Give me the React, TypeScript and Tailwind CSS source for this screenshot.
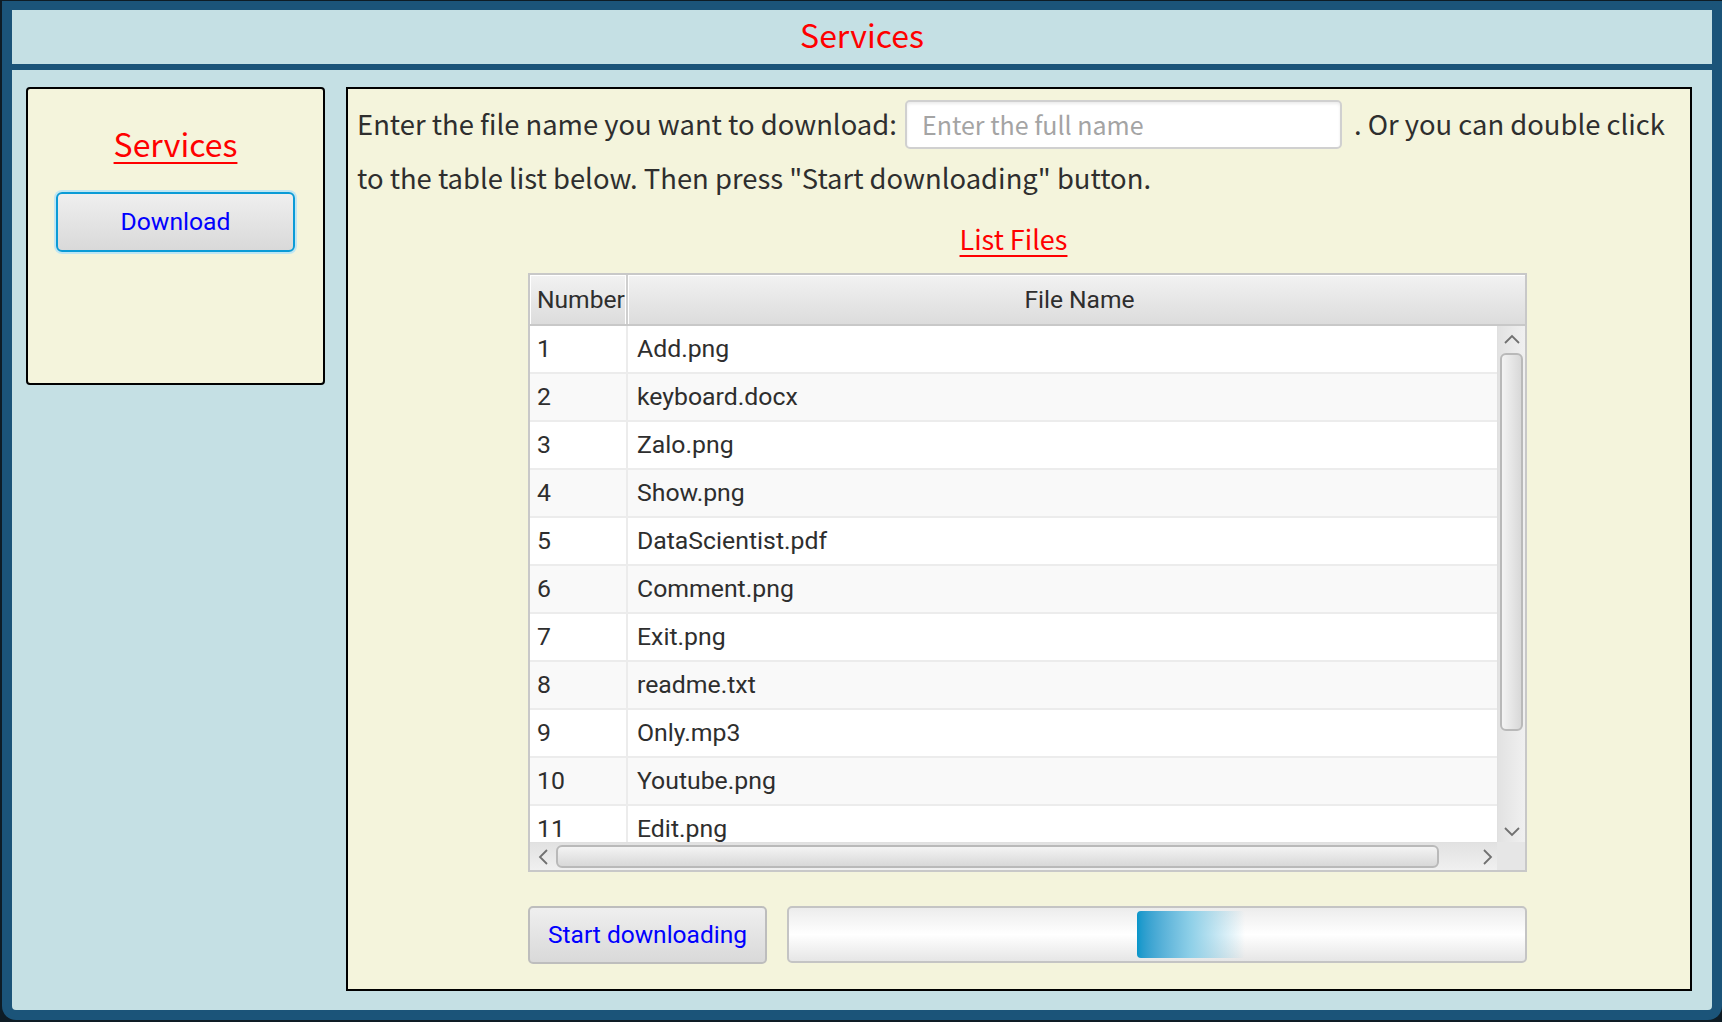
import { useState } from 'react'

const files = [
  'Add.png',
  'keyboard.docx',
  'Zalo.png',
  'Show.png',
  'DataScientist.pdf',
  'Comment.png',
  'Exit.png',
  'readme.txt',
  'Only.mp3',
  'Youtube.png',
  'Edit.png',
]

const krFont = "font-['Noto_Sans_CJK_KR','Noto_Sans',sans-serif]"

function Chevron({ dir }: { dir: 'up' | 'down' | 'left' | 'right' }) {
  const vertical = dir === 'up' || dir === 'down'
  const pts = {
    up: '2,9 9,2 16,9',
    down: '2,2 9,9 16,2',
    left: '9,2 2,9 9,16',
    right: '2,2 9,9 2,16',
  }[dir]
  return (
    <svg viewBox={vertical ? '0 0 18 11' : '0 0 11 18'} className={vertical ? 'w-[18px] h-[11px]' : 'w-[11px] h-[18px]'}>
      <polyline points={pts} fill="none" stroke="#707070" strokeWidth="1.8" />
    </svg>
  )
}

export default function App() {
  const [fileName, setFileName] = useState('')

  return (
    <div className="w-[1722px] h-[1022px] bg-[#0e1c25] pl-[2px] pt-px pb-[2px] font-['Roboto',sans-serif]">
      <div className="h-full flex flex-col border-[10px] border-t-[9px] border-[#1b5479] rounded-b-[14px] bg-[#c5e0e4] overflow-hidden">
        {/* title bar */}
        <div className={`h-[54px] pb-[6px] flex items-center justify-center text-[32px] text-[#ff0000] ${krFont}`}>
          Services
        </div>
        <div className="h-[6px] bg-[#1b5479]" />

        <div className="flex-1 flex gap-[21px] pl-[14px] pr-[20px] pt-[17px] pb-[19px]">
          {/* side menu */}
          <div className="w-[299px] h-[298px] shrink-0 bg-[#f4f4dc] border-2 border-black rounded-[4px] flex flex-col items-center">
            <div className={`mt-[29px] h-[50px] leading-[50px] text-[32px] text-[#ff0000] underline underline-offset-[5px] decoration-2 ${krFont}`}>
              Services
            </div>
            <button className="mt-[24px] w-[239px] h-[60px] rounded-[6px] border-2 border-[#0a9bd6] shadow-[0_0_0_2px_#bfe6f3] bg-gradient-to-b from-[#efefef] to-[#d9d9d9] text-[24.7px] text-[#0000ff]">
              Download
            </button>
          </div>

          {/* main */}
          <div className="flex-1 bg-[#f4f4dc] border-2 border-black flex flex-col">
            <div className={`pl-[9px] pt-[7px] leading-[54px] text-[27.4px] text-[#2e2e2e] ${krFont}`}>
              Enter the file name you want to download:{' '}
              <input
                value={fileName}
                onChange={(e) => setFileName(e.target.value)}
                placeholder="Enter the full name"
                className={`ml-[2px] mr-[12px] w-[437px] h-[49px] px-[15px] bg-white rounded-[5px] border-2 border-[#d0d0d0] shadow-[inset_0_2px_3px_rgba(0,0,0,0.08)] text-[25px] placeholder:text-[#a4a4a4] outline-none ${krFont}`}
              />
              . Or you can double click
              <br />
              to the table list below. Then press "Start downloading" button.
            </div>

            <div className={`ml-[180px] w-[999px] pr-[28px] mt-[18px] text-center leading-[34px] text-[27px] text-[#ff0000] ${krFont}`}>
              <span className="underline underline-offset-[5px] decoration-2">List Files</span>
            </div>

            {/* table */}
            <div className="ml-[180px] mt-[17px] w-[999px] h-[599px] border-2 border-[#c8c8c8] flex flex-col bg-white">
              <div className="h-[51px] shrink-0 flex border-b-2 border-[#c8c8c8] bg-gradient-to-b from-[#f2f2f2] to-[#dcdcdc] text-[24.6px] text-[#2e2e2e]">
                <div className="w-[98px] flex items-center pl-[7px] pt-[2px] border-r-2 border-[#cfcfcf] shadow-[inset_-1px_0_0_#fff,inset_1px_1px_0_#fff]">
                  Number
                </div>
                <div className="flex-1 flex items-center justify-center pl-[6px] pt-[2px] shadow-[inset_1px_1px_0_#fff]">File Name</div>
              </div>

              <div className="h-[516px] shrink-0 flex">
                <div className="flex-1 overflow-hidden">
                  {files.map((f, i) => (
                    <div
                      key={f}
                      className={`h-[48px] flex border-b-2 border-[#ececec] text-[24.8px] text-[#2e2e2e] ${i % 2 === 0 ? 'bg-white' : 'bg-[#f9f9f9]'}`}
                    >
                      <div className="w-[98px] shrink-0 flex items-center pl-[7px] border-r-2 border-[#ececec]">{i + 1}</div>
                      <div className="flex-1 flex items-center pl-[9px]">{f}</div>
                    </div>
                  ))}
                </div>
                <div className="w-[28px] shrink-0 bg-gradient-to-r from-[#e2e2e2] to-[#f0f0f0] border-l border-[#e0e0e0] flex flex-col items-center">
                  <div className="h-[27px] flex items-center justify-center">
                    <Chevron dir="up" />
                  </div>
                  <div className="w-[23px] h-[378px] rounded-[6px] border-2 border-[#b9b9b9] bg-gradient-to-r from-[#f4f4f4] to-[#d8d8d8]" />
                  <div className="flex-1 flex items-end justify-center pb-[5px]">
                    <Chevron dir="down" />
                  </div>
                </div>
              </div>

              <div className="flex-1 flex">
                <div className="flex-1 bg-gradient-to-b from-[#e2e2e2] to-[#f0f0f0] border-t border-[#e0e0e0] flex items-center">
                  <div className="w-[26px] flex justify-center">
                    <Chevron dir="left" />
                  </div>
                  <div className="w-[883px] h-[23px] rounded-[6px] border-2 border-[#b9b9b9] bg-gradient-to-b from-[#f4f4f4] to-[#d8d8d8]" />
                  <div className="flex-1 flex justify-end pr-[4px]">
                    <Chevron dir="right" />
                  </div>
                </div>
                <div className="w-[28px] bg-[#e6e6e6]" />
              </div>
            </div>

            {/* actions */}
            <div className="ml-[180px] mt-[34px] flex gap-[20px]">
              <button className="w-[239px] h-[58px] rounded-[5px] border-2 border-[#bdbdbd] bg-gradient-to-b from-[#efefef] to-[#d9d9d9] text-[24.5px] text-[#0000ff]">
                Start downloading
              </button>
              <div className="relative w-[740px] h-[57px] rounded-[5px] border-2 border-[#c4c4c4] bg-gradient-to-b from-[#ececec] via-[#ffffff] to-[#e6e6e6]">
                <div className="absolute left-[348px] top-[3px] w-[108px] h-[47px] rounded-[4px] bg-gradient-to-r from-[#0596ca] via-[#8fd0e8] to-transparent" />
              </div>
            </div>
          </div>
        </div>
      </div>
    </div>
  )
}
